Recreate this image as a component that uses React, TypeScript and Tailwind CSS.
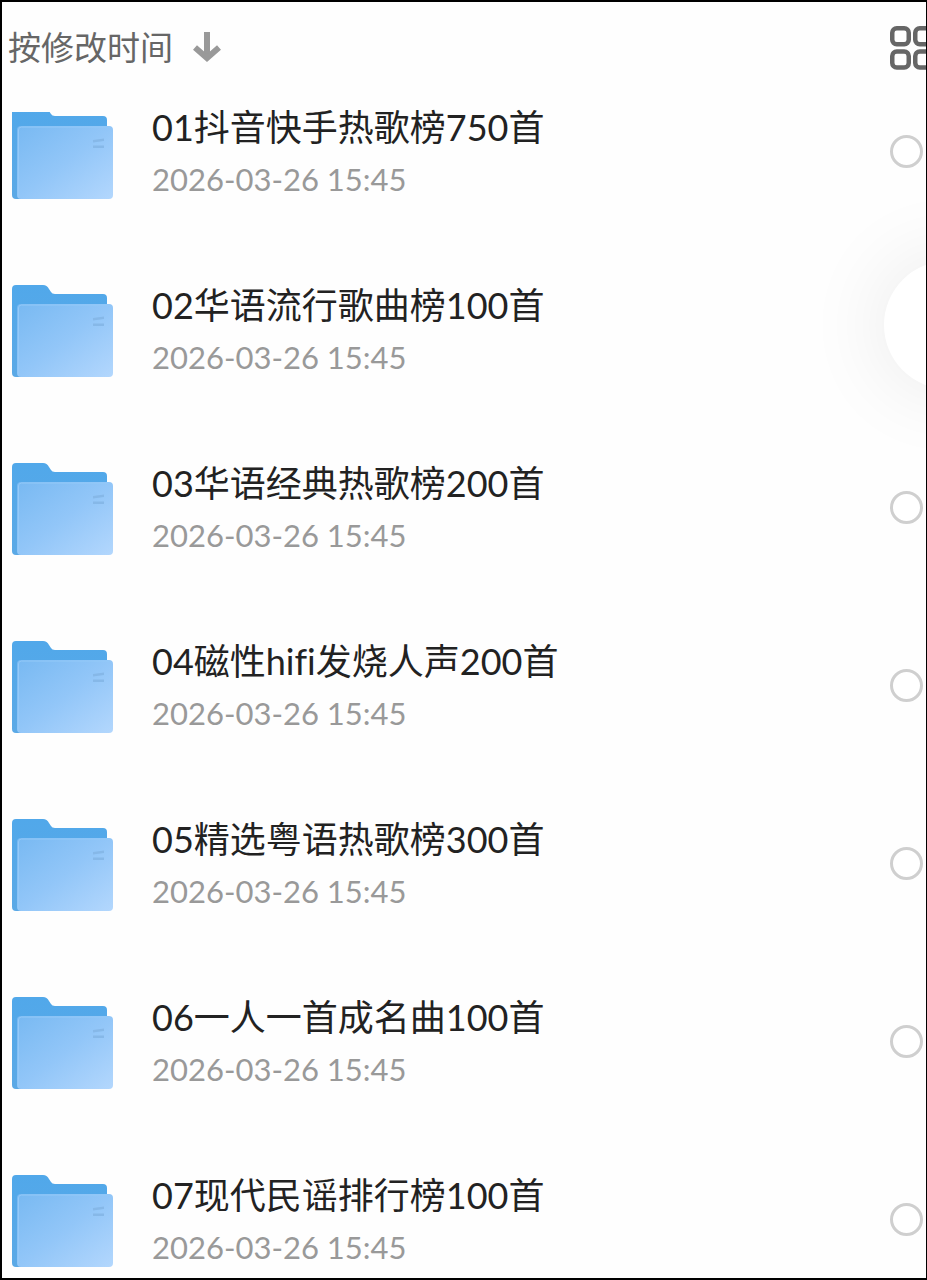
import { useState } from 'react';

interface Folder {
  id: string;
  name: string;
  modified: string;
}

const folders: Folder[] = [
  { id: '01', name: '01抖音快手热歌榜750首', modified: '2026-03-26 15:45' },
  { id: '02', name: '02华语流行歌曲榜100首', modified: '2026-03-26 15:45' },
  { id: '03', name: '03华语经典热歌榜200首', modified: '2026-03-26 15:45' },
  { id: '04', name: '04磁性hifi发烧人声200首', modified: '2026-03-26 15:45' },
  { id: '05', name: '05精选粤语热歌榜300首', modified: '2026-03-26 15:45' },
  { id: '06', name: '06一人一首成名曲100首', modified: '2026-03-26 15:45' },
  { id: '07', name: '07现代民谣排行榜100首', modified: '2026-03-26 15:45' },
];

function FolderIcon() {
  return (
    <svg
      viewBox="0 0 102 92"
      className="h-[92px] w-[102px] shrink-0 group-first:[clip-path:inset(5px_0_0)]"
      aria-hidden="true"
    >
      <defs>
        <linearGradient id="folder-back" x1="0" y1="0" x2="0" y2="1">
          <stop offset="0" stopColor="#51a8ea" />
          <stop offset="1" stopColor="#5ba9e6" />
        </linearGradient>
        <linearGradient id="folder-front" x1="0" y1="0" x2="1" y2="1">
          <stop offset="0" stopColor="#78b9f2" />
          <stop offset="0.5" stopColor="#92c6f8" />
          <stop offset="1" stopColor="#b3d7fd" />
        </linearGradient>
      </defs>
      <path
        d="M4 0H31Q35 0 37 4L39 7Q40 9 43 9H91Q95 9 95 13V60H10V92H4Q0 92 0 88V4Q0 0 4 0Z"
        fill="url(#folder-back)"
      />
      <rect x="5" y="19" width="96" height="73" rx="4" fill="url(#folder-front)" />
      <path d="M6.500 91V23Q6.500 20 9.500 20H97" fill="none" stroke="#93c9f8" strokeWidth="1" />
      <path d="M81 33L92 31.500V34L81 35.500ZM81 38.500H92V41H81Z" fill="#86b8e8" />
    </svg>
  );
}

function SortArrow() {
  return (
    <svg viewBox="0 0 28 30" className="h-[30px] w-7" fill="none" stroke="#999" strokeWidth="6" aria-hidden="true">
      <path d="M14 0V26" />
      <path d="M2 15.500L14 26L26 15.500" />
    </svg>
  );
}

function GridIcon() {
  return (
    <svg viewBox="0 0 44 44" className="h-11 w-11" fill="none" stroke="#666" strokeWidth="4.500" aria-hidden="true">
      <rect x="2.250" y="2.250" width="16.500" height="16" rx="4.500" />
      <rect x="25.250" y="2.250" width="16.500" height="16" rx="4.500" />
      <rect x="2.250" y="25.500" width="16.500" height="16" rx="4.500" />
      <rect x="25.250" y="25.500" width="16.500" height="16" rx="4.500" />
    </svg>
  );
}

function FolderRow({ folder, checked, onToggle }: { folder: Folder; checked: boolean; onToggle: () => void }) {
  const inputId = `folder-${folder.id}`;

  return (
    <li className="group flex items-center pr-[3px] pl-[10px]">
      <FolderIcon />
      <label htmlFor={inputId} className="ml-[38px] min-w-0 flex-1">
        <span className="block text-[36px] leading-[52px] text-[#222]">{folder.name}</span>
        <span className="block text-[31px] leading-[52px] text-[#999]">{folder.modified}</span>
      </label>
      <input
        id={inputId}
        type="checkbox"
        checked={checked}
        onChange={onToggle}
        className="mb-[3px] size-[33px] shrink-0 appearance-none rounded-full border-3 border-[#cfcfcf] bg-white checked:border-[#51a8ea] checked:bg-[#51a8ea]"
      />
    </li>
  );
}

export default function App() {
  const [selected, setSelected] = useState<string[]>([]);

  const toggle = (id: string) => {
    setSelected((prev) => (prev.includes(id) ? prev.filter((item) => item !== id) : [...prev, id]));
  };

  return (
    <main className="relative flex h-screen flex-col overflow-hidden border-2 border-r border-black bg-[#fefefe] font-[Lato,'Noto_Sans_CJK_SC',sans-serif] [font-variant-ligatures:none]">
      {/* Sort bar */}
      <header className="flex shrink-0 items-start justify-between pt-5 pb-[29px]">
        <button type="button" className="flex items-center gap-5 pl-[6px] text-[33px] leading-[50px] text-[#666]">
          按修改时间
          <SortArrow />
        </button>
        <button type="button" aria-label="网格视图" className="-mr-2 pt-1">
          <GridIcon />
        </button>
      </header>

      {/* Folder list */}
      <ul className="flex min-h-0 flex-1 flex-col gap-[74px]">
        {folders.map((folder) => (
          <FolderRow
            key={folder.id}
            folder={folder}
            checked={selected.includes(folder.id)}
            onToggle={() => toggle(folder.id)}
          />
        ))}
      </ul>

      {/* Floating button, half off the right edge */}
      <button
        type="button"
        aria-label="悬浮按钮"
        className="absolute top-[259px] -right-[86px] size-32 rounded-full bg-white shadow-[0_0_80px_8px_rgba(0,0,0,0.07)]"
      />
    </main>
  );
}
